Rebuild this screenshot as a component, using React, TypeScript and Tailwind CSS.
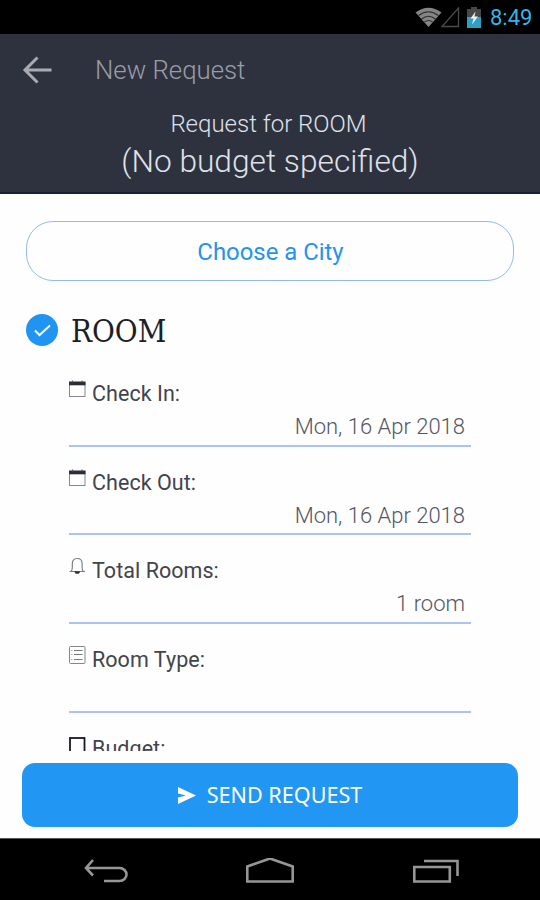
import type { ReactNode } from "react";

function CalendarIcon() {
  return (
    <svg width="17" height="18" viewBox="0 0 17 18" fill="none">
      <rect x="0.500" y="2.500" width="15.500" height="14" stroke="#85878c" />
      <path d="M0 1.500h16.500v3.800H0z" fill="#2b2d37" />
      <path d="M3.500 0.500v2M13 0.500v2" stroke="#55575f" strokeWidth="1.200" />
    </svg>
  );
}

function BellIcon() {
  return (
    <svg width="17" height="18" viewBox="0 0 17 18" fill="none" stroke="#77787c" strokeWidth="1.1">
      <path d="M0.500 14.500h15.500M2 14.500c1-1 1.300-2.500 1.300-4V6.500c0-3 1.700-5 4.900-5s4.900 2 4.900 5v4c0 1.500 0.300 3 1.400 4" />
      <path d="M5.500 14.200h5.500a2.700 2.500 0 0 1-5.500 0z" fill="#333" stroke="none" />
    </svg>
  );
}

function ListIcon() {
  return (
    <svg width="17" height="19" viewBox="0 0 17 19" fill="none">
      <rect x="0.500" y="0.500" width="15.500" height="17" rx="1" stroke="#85868a" />
      <path d="M5 4.500h8.500M5 8.500h8.500M5 13.500h8.500" stroke="#77787c" />
      <path d="M2 4.500h1.500M2 8.500h1.500M2 13.500h1.500" stroke="#b5b6ba" />
    </svg>
  );
}

function BoxIcon() {
  return (
    <svg width="17" height="19" viewBox="0 0 17 19" fill="none" className="mt-[2px]">
      <rect x="1" y="1" width="14.500" height="16" stroke="#16172a" strokeWidth="1.800" />
    </svg>
  );
}

const fields: { label: string; value: string; icon: ReactNode }[] = [
  { label: "Check In:", value: "Mon, 16 Apr 2018", icon: <CalendarIcon /> },
  { label: "Check Out:", value: "Mon, 16 Apr 2018", icon: <CalendarIcon /> },
  { label: "Total Rooms:", value: "1 room", icon: <BellIcon /> },
  { label: "Room Type:", value: "", icon: <ListIcon /> },
  { label: "Budget:", value: "", icon: <BoxIcon /> },
];

function StatusBar() {
  return (
    <div className="h-[34px] shrink-0 bg-black flex items-center justify-end pr-[8px]">
      <svg width="27" height="20" viewBox="0 0 27 20">
        <path d="M0.500 5.500Q13.500-4 26.500 5.500L13.500 20z" fill="#858585" />
        <path d="M3.500 8.500Q13.500 1 23.500 8.500M6.500 12Q13.500 6.500 20.500 12M9.500 15Q13.500 12 17.500 15" fill="none" stroke="#2c2c2c" strokeWidth="1.200" />
      </svg>
      <svg width="19" height="21" viewBox="0 0 19 21" fill="none" className="-ml-px">
        <path d="M17.500 1v18.500H1z" stroke="#4b4b4b" strokeWidth="1.300" />
      </svg>
      <svg width="14" height="21" viewBox="0 0 14 21" className="ml-[7px]">
        <path d="M4 0h6v2h4v19H0V2h4z" fill="#484848" />
        <path d="M0 10h14v11H0z" fill="#2f9fc4" />
        <path d="M8.500 4.500L3.500 11.500h3l-1.500 6 6-8H7.500z" fill="#e8f2f5" />
      </svg>
      <span className="ml-[9px] mt-[2px] w-[42px] text-[22px] leading-none text-[#33b5e5] whitespace-nowrap">8:49</span>
    </div>
  );
}

function Header() {
  return (
    <header className="h-[160px] shrink-0 bg-[#2e323f] border-b-2 border-[#1b1f36]">
      <div className="h-[72px] flex items-center">
        <svg width="30" height="28" viewBox="0 0 30 28" fill="none" stroke="#a9abb0" strokeWidth="3" className="ml-[22px]">
          <path d="M15.500 1.500L3 14l12.500 12.500M3 14h26.500" />
        </svg>
        <h1 className="ml-[43px] pt-[2px] text-[25.800px] font-light leading-none text-[#9a9da6] whitespace-nowrap">New Request</h1>
      </div>
      <div className="flex flex-col items-center text-[#dfe1e8] whitespace-nowrap">
        <p className="mt-[4px] -ml-[3px] text-[24px] leading-[28px] font-[350]">Request for ROOM</p>
        <p className="mt-[5px] text-[31.700px] leading-[38px] font-[320]">(No budget specified)</p>
      </div>
    </header>
  );
}

function NavBar() {
  return (
    <nav className="h-[62px] shrink-0 bg-black border-t border-[#555] flex items-start pt-[19px]">
      <svg width="46" height="27" viewBox="0 0 46 27" fill="none" stroke="#969696" strokeWidth="2.600" className="ml-[84px]">
        <path d="M9 2L2 10l7 7.500M2 10h33.500c4 0 7 3 7 6.500s-3 6.500-7 6.500H20" />
      </svg>
      <svg width="50" height="27" viewBox="0 0 50 27" fill="none" stroke="#969696" strokeWidth="2.600" className="ml-[115px]">
        <path d="M2.300 23.500V8.500L25 0.500l22.700 8v15z" />
      </svg>
      <svg width="48" height="27" viewBox="0 0 48 27" fill="none" stroke="#969696" strokeWidth="2.600" className="ml-[117px]">
        <path d="M2.300 9h35.500v14.500H2.300zM12 3h33.500v15" />
      </svg>
    </nav>
  );
}

export default function App() {
  return (
    <div className="w-[540px] h-[900px] overflow-hidden flex flex-col bg-[#fefefe] font-[Roboto,sans-serif]">
      <StatusBar />
      <Header />

      <main className="h-[557px] shrink-0 overflow-hidden">
        <button className="mt-[27px] mx-[26px] w-[488px] h-[60px] flex items-center justify-center rounded-[27px] border-[1.500px] border-[#93baf0] pt-[4px] pl-px text-[23.900px] font-[370] text-[#2593ee] whitespace-nowrap">
          Choose a City
        </button>

        <div className="mt-[33px] ml-[26px] h-8 flex items-center">
          <svg width="32" height="32" viewBox="0 0 32 32" fill="none">
            <circle cx="16" cy="16" r="16" fill="#2094f3" />
            <path d="M9 16.500l4.500 4.500L24 11.500" stroke="#fff" strokeWidth="2" />
          </svg>
          <h2 className="ml-[13px] pt-[2px] text-[31px] leading-none text-[#1d1e28] font-['DejaVu_Serif_Condensed','DejaVu_Serif',serif] font-stretch-condensed">ROOM</h2>
        </div>

        <div className="mt-[12px] mx-[69px]">
          {fields.map((f) => (
            <div key={f.label} className="h-[88.700px] flex flex-col border-b-2 border-[#a9c4f2] pt-[22px]">
              <div className="h-[26px] flex items-start">
                {f.icon}
                <span className="ml-[6px] text-[21.500px] leading-[27px] font-[370] text-[#42444c] whitespace-nowrap tracking-[0.050px]">{f.label}</span>
              </div>
              <span className="mt-[7px] mr-[6px] self-end text-[22px] leading-[28.500px] font-light text-[#55575e] whitespace-nowrap">
                {f.value}
              </span>
            </div>
          ))}
        </div>
      </main>

      <div className="h-[87px] shrink-0 px-[22px] pt-[12px]">
        <button className="w-full h-[64px] rounded-[13px] bg-[#2196f3] flex items-center justify-center text-white">
          <svg width="18" height="17" viewBox="0 0 18 17" fill="currentColor">
            <path d="M0 0l18 8.500L0 17v-6.500l8-2-8-2z" />
          </svg>
          <span className="ml-[11px] text-[21.600px] leading-none font-['Noto_Sans',sans-serif] whitespace-nowrap">SEND REQUEST</span>
        </button>
      </div>

      <NavBar />
    </div>
  );
}
